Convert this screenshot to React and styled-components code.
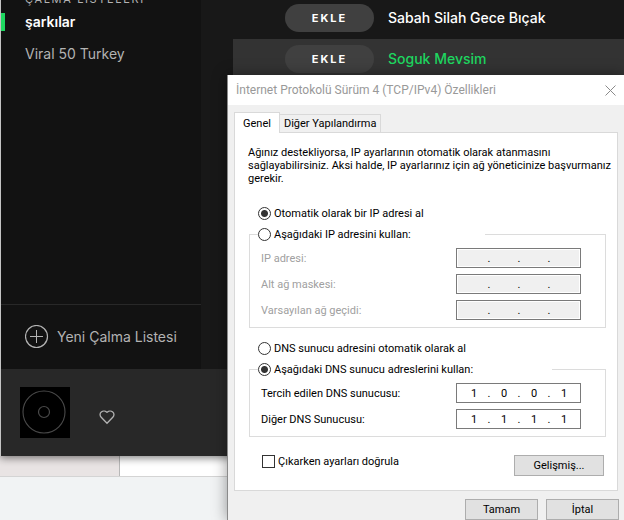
import React, { useState } from "react";
import styled, { createGlobalStyle } from "styled-components";

const playlists = [
  { name: "şarkılar", active: true },
  { name: "Viral 50 Turkey", active: false },
];

const tracks = [
  { title: "Sabah Silah Gece Bıçak", playing: false },
  { title: "Soguk Mevsim", playing: true },
];

const ipFields = [
  { id: "ip", label: "IP adresi:" },
  { id: "mask", label: "Alt ağ maskesi:" },
  { id: "gateway", label: "Varsayılan ağ geçidi:" },
];

const dnsFields = [
  { id: "dns1", label: "Tercih edilen DNS sunucusu:", value: ["1", "0", "0", "1"] },
  { id: "dns2", label: "Diğer DNS Sunucusu:", value: ["1", "1", "1", "1"] },
];

const emptyAddress = ["", "", "", ""];

function AddressField({ id, label, value, disabled }) {
  const [octets, setOctets] = useState(value || emptyAddress);

  const update = (index, next) => {
    setOctets(octets.map((octet, i) => (i === index ? next : octet)));
  };

  return (
    <FieldRow>
      <FieldLabel htmlFor={`${id}-0`} $disabled={disabled}>
        {label}
      </FieldLabel>
      <AddressBox $disabled={disabled}>
        {octets.map((octet, i) => (
          <React.Fragment key={i}>
            {i > 0 && <Dot>.</Dot>}
            <Octet
              id={`${id}-${i}`}
              aria-label={`${label} ${i + 1}`}
              value={octet}
              maxLength={3}
              disabled={disabled}
              onChange={(evt) => update(i, evt.target.value)}
            />
          </React.Fragment>
        ))}
      </AddressBox>
    </FieldRow>
  );
}

function Player() {
  return (
    <PlayerWindow>
      <Columns>
        <Sidebar>
          <SidebarHeading>ÇALMA LİSTELERİ</SidebarHeading>
          <Playlists>
            {playlists.map((item) => (
              <PlaylistItem key={item.name} $active={item.active}>
                <a href="#playlist">{item.name}</a>
              </PlaylistItem>
            ))}
          </Playlists>
          <NewPlaylist type="button">
            <svg width="24" height="24" viewBox="0 0 24 24" fill="none" stroke="currentColor">
              <circle cx="11.5" cy="11.5" r="11" strokeWidth="1.2" />
              <path d="M11.5 5v13M5 11.5h13" strokeWidth="1" />
            </svg>
            Yeni Çalma Listesi
          </NewPlaylist>
        </Sidebar>
        <TrackList>
          {tracks.map((track) => (
            <Track key={track.title} $playing={track.playing}>
              <AddButton type="button">EKLE</AddButton>
              <span>{track.title}</span>
            </Track>
          ))}
        </TrackList>
      </Columns>
      <NowPlaying>
        <Cover>
          <svg width="50" height="50" viewBox="0 0 50 50" fill="none" stroke="#4a4a4a">
            <circle cx="24" cy="25" r="21" strokeWidth="1.1" />
            <circle cx="24" cy="25" r="5.5" strokeWidth="1.2" />
          </svg>
        </Cover>
        <LikeButton type="button" aria-label="Beğen">
          <svg width="16" height="16" viewBox="0 0 16 16" fill="none" stroke="currentColor" strokeWidth="1.3">
            <path d="M8 14.3 2.2 8.3C.6 6.6.7 4.1 2.3 2.9 4 1.6 6.4 1.9 7.5 3 7.8 3.3 8.2 3.3 8.5 3 9.6 1.9 12 1.6 13.7 2.9 15.3 4.1 15.4 6.6 13.8 8.3Z" />
          </svg>
        </LikeButton>
      </NowPlaying>
    </PlayerWindow>
  );
}

function PropertiesDialog() {
  const [ipMode, setIpMode] = useState("auto");
  const [dnsMode, setDnsMode] = useState("manual");
  const [validate, setValidate] = useState(false);

  return (
    <Dialog role="dialog" aria-labelledby="dialog-title">
      <TitleBar>
        <Title id="dialog-title">İnternet Protokolü Sürüm 4 (TCP/IPv4) Özellikleri</Title>
        <CloseButton type="button" aria-label="Kapat">
          <svg width="11" height="11" viewBox="0 0 11 11" stroke="currentColor">
            <path d="M.5.5l10 10M10.5.5l-10 10" />
          </svg>
        </CloseButton>
      </TitleBar>
      <DialogBody>
        <Tabs role="tablist">
          <Tab type="button" role="tab" aria-selected="true" $active>
            Genel
          </Tab>
          <Tab type="button" role="tab" aria-selected="false">
            Diğer Yapılandırma
          </Tab>
        </Tabs>
        <Panel>
          <Intro>
            Ağınız destekliyorsa, IP ayarlarının otomatik olarak atanmasını
            <br />
            sağlayabilirsiniz. Aksi halde, IP ayarlarınız için ağ yöneticinize başvurmanız
            <br />
            gerekir.
          </Intro>
          <Section $gap={21}>
            <Choice>
              <Radio type="radio" name="ip" checked={ipMode === "auto"} onChange={() => setIpMode("auto")} />
              Otomatik olarak bir IP adresi al
            </Choice>
            <Group>
              <Legend $width={227}>
                <Choice $inLegend>
                  <Radio type="radio" name="ip" checked={ipMode === "manual"} onChange={() => setIpMode("manual")} />
                  Aşağıdaki IP adresini kullan:
                </Choice>
              </Legend>
              <Fields>
                {ipFields.map((field) => (
                  <AddressField key={field.id} {...field} disabled={ipMode === "auto"} />
                ))}
              </Fields>
            </Group>
          </Section>
          <Section $gap={13}>
            <Choice>
              <Radio type="radio" name="dns" checked={dnsMode === "auto"} onChange={() => setDnsMode("auto")} />
              DNS sunucu adresini otomatik olarak al
            </Choice>
            <Group>
              <Legend $width={294}>
                <Choice $inLegend>
                  <Radio type="radio" name="dns" checked={dnsMode === "manual"} onChange={() => setDnsMode("manual")} />
                  Aşağıdaki DNS sunucu adreslerini kullan:
                </Choice>
              </Legend>
              <Fields>
                {dnsFields.map((field) => (
                  <AddressField key={field.id} {...field} disabled={dnsMode === "auto"} />
                ))}
              </Fields>
            </Group>
          </Section>
          <PanelFooter>
            <CheckLabel>
              <Checkbox type="checkbox" checked={validate} onChange={(evt) => setValidate(evt.target.checked)} />
              Çıkarken ayarları doğrula
            </CheckLabel>
            <Button type="button" $width={90}>
              Gelişmiş...
            </Button>
          </PanelFooter>
        </Panel>
        <Actions>
          <Button type="button">Tamam</Button>
          <Button type="button">İptal</Button>
        </Actions>
      </DialogBody>
    </Dialog>
  );
}

export default function App() {
  return (
    <Desktop>
      <GlobalStyle />
      <Player />
      <PageStrip>
        <StripSide />
      </PageStrip>
      <PropertiesDialog />
    </Desktop>
  );
}

const GlobalStyle = createGlobalStyle`
  * {
    box-sizing: border-box;
  }
  body {
    margin: 0;
    overflow: hidden;
  }
  button, input {
    font: inherit;
    margin: 0;
    padding: 0;
  }
`;

const Desktop = styled.div`
  position: relative;
  height: 100vh;
  overflow: hidden;
  background: #f1f3f4;
`;

const PlayerWindow = styled.div`
  position: relative;
  border-left: 1px solid #c4c4c4;
  background: #181818;
  color: #b3b3b3;
  font-family: Inter, sans-serif;
  font-size: 14px;
  box-shadow: 0 2px 8px rgba(0, 0, 0, 0.5);
`;

const Columns = styled.div`
  display: grid;
  grid-template-columns: 200px 1fr;
  height: 369px;
`;

const Sidebar = styled.div`
  display: flex;
  flex-direction: column;
  min-height: 0;
  background: #121212;
`;

const SidebarHeading = styled.div`
  height: 6px;
  padding-left: 24px;
  display: flex;
  align-items: flex-end;
  font-size: 11px;
  line-height: 14px;
  letter-spacing: 0.15em;
  white-space: nowrap;
`;

const Playlists = styled.ul`
  flex: 1;
  margin: 0;
  padding: 0;
  list-style: none;
`;

const PlaylistItem = styled.li`
  display: flex;
  align-items: center;
  height: 32px;

  &::before {
    content: "";
    width: 4px;
    height: 18px;
    margin-right: 20px;
    background: ${(props) => (props.$active ? "#1ed760" : "transparent")};
  }

  a {
    padding-bottom: 1px;
    color: ${(props) => (props.$active ? "#fff" : "#b3b3b3")};
    font-weight: ${(props) => (props.$active ? 600 : 400)};
    text-decoration: none;
  }
`;

const NewPlaylist = styled.button`
  display: flex;
  align-items: center;
  gap: 8px;
  height: 65px;
  padding: 0 0 1px 24px;
  border: 0;
  border-top: 1px solid #282828;
  background: none;
  color: #b3b3b3;
`;

const TrackList = styled.div`
  margin-top: -2px;
  padding-left: 32px;
`;

const Track = styled.div`
  display: flex;
  align-items: center;
  gap: 14px;
  height: 41px;
  padding: 0 0 1px 52px;
  background: ${(props) => (props.$playing ? "#333" : "transparent")};
  color: ${(props) => (props.$playing ? "#1ed760" : "#fff")};
  font-weight: 500;

  span {
    padding-bottom: 1px;
  }
`;

const AddButton = styled.button`
  width: 89px;
  height: 28px;
  padding-bottom: 1px;
  border: 0;
  border-radius: 14px;
  background: #404040;
  color: #fff;
  font-size: 11px;
  font-weight: 700;
  letter-spacing: 2px;
`;

const NowPlaying = styled.div`
  display: flex;
  align-items: center;
  gap: 29px;
  height: 87px;
  padding: 0 0 1px 19px;
  background: #282828;
`;

const Cover = styled.div`
  width: 50px;
  height: 51px;
  background: #000;
`;

const LikeButton = styled.button`
  display: flex;
  padding-top: 10px;
  border: 0;
  background: none;
  color: #b3b3b3;
`;

const PageStrip = styled.div`
  height: 21px;
  border-bottom: 1px solid #d4d4d4;
  background: #fff;
`;

const StripSide = styled.div`
  width: 120px;
  height: 20px;
  border-right: 1px solid #b8b8b8;
  background: #e9e4e4;
`;

/* dialog window floating over the player */
const Dialog = styled.div`
  position: absolute;
  top: 75px;
  left: 227px;
  right: 0;
  border-left: 1px solid #8a8a8a;
  background: #f0f0f0;
  color: #000;
  font-family: Roboto, sans-serif;
  font-size: 11px;
  line-height: 13px;
  box-shadow: 0 0 14px rgba(0, 0, 0, 0.4);
`;

const TitleBar = styled.div`
  display: flex;
  align-items: center;
  justify-content: space-between;
  height: 30px;
  padding: 0 8px;
  background: #fff;
  color: #999;
`;

const Title = styled.div`
  font-size: 12px;
  white-space: nowrap;
`;

const CloseButton = styled.button`
  display: flex;
  border: 0;
  background: none;
  color: #8a8a8a;
`;

const DialogBody = styled.div`
  padding: 7px 6px 0;
`;

const Tabs = styled.div`
  display: flex;
  align-items: flex-end;
`;

const Tab = styled.button`
  position: relative;
  height: ${(props) => (props.$active ? 21 : 18)}px;
  margin-bottom: ${(props) => (props.$active ? -1 : 0)}px;
  padding: 0 ${(props) => (props.$active ? 8 : 4)}px;
  border: 1px solid #d9d9d9;
  border-bottom: 0;
  border-left-width: ${(props) => (props.$active ? 1 : 0)}px;
  background: ${(props) => (props.$active ? "#fff" : "#f0f0f0")};
  color: #000;
  white-space: nowrap;
`;

const Panel = styled.div`
  padding: 13px 12px 14px 13px;
  border: 1px solid #d9d9d9;
  background: #fff;
`;

const Intro = styled.p`
  margin: 0;
  white-space: nowrap;
`;

const Section = styled.div`
  display: flex;
  flex-direction: column;
  gap: 7px;
  margin-top: ${(props) => props.$gap}px;
`;

const Choice = styled.label`
  display: flex;
  align-items: center;
  gap: 3px;
  height: 14px;
  padding-left: ${(props) => (props.$inLegend ? 0 : 10)}px;
  white-space: nowrap;
`;

const Radio = styled.input`
  appearance: none;
  flex: none;
  width: 13px;
  height: 13px;
  border: 1px solid #333;
  border-radius: 50%;
  background: #fff;

  &:checked {
    background: radial-gradient(circle, #333 3px, #fff 4px);
  }
`;

const Group = styled.fieldset`
  min-width: 0;
  margin: 0 -1px 0 1px;
  padding: 7px 24px 7px 8px;
  border: 1px solid #dcdcdc;
`;

const Legend = styled.legend`
  width: ${(props) => props.$width}px;
  padding: 0;
`;

const Fields = styled.div`
  display: flex;
  flex-direction: column;
  gap: 6px;
  padding-left: 3px;
`;

const FieldRow = styled.div`
  display: flex;
  align-items: center;
  justify-content: space-between;
  height: 20px;
`;

const FieldLabel = styled.label`
  color: ${(props) => (props.$disabled ? "#a0a0a0" : "#000")};
  white-space: nowrap;
`;

const AddressBox = styled.div`
  display: flex;
  align-items: center;
  width: 125px;
  height: 20px;
  padding-left: 4px;
  border: 1px solid #7a7a7a;
  background: ${(props) => (props.$disabled ? "#f0f0f0" : "#fff")};
  box-shadow: inset 0 0 0 1px #fff;
`;

const Octet = styled.input`
  width: 26px;
  height: 16px;
  border: 0;
  outline: 0;
  background: none;
  text-align: center;
`;

const Dot = styled.span`
  width: 4px;
  text-align: center;
`;

const PanelFooter = styled.div`
  display: flex;
  justify-content: space-between;
  margin-top: 18px;
  padding: 0 1px 0 14px;
`;

const CheckLabel = styled.label`
  display: flex;
  align-items: center;
  gap: 3px;
  height: 13px;
  white-space: nowrap;
`;

const Checkbox = styled.input`
  appearance: none;
  width: 13px;
  height: 13px;
  border: 1px solid #333;
  background: #fff;

  &:checked {
    background: #333;
    box-shadow: inset 0 0 0 2px #fff;
  }
`;

const Button = styled.button`
  width: ${(props) => props.$width || 73}px;
  height: 21px;
  border: 1px solid #adadad;
  background: #e1e1e1;
  color: #000;
`;

const Actions = styled.div`
  display: flex;
  justify-content: flex-end;
  gap: 8px;
  margin-right: -1px;
  padding-top: 8px;
`;
